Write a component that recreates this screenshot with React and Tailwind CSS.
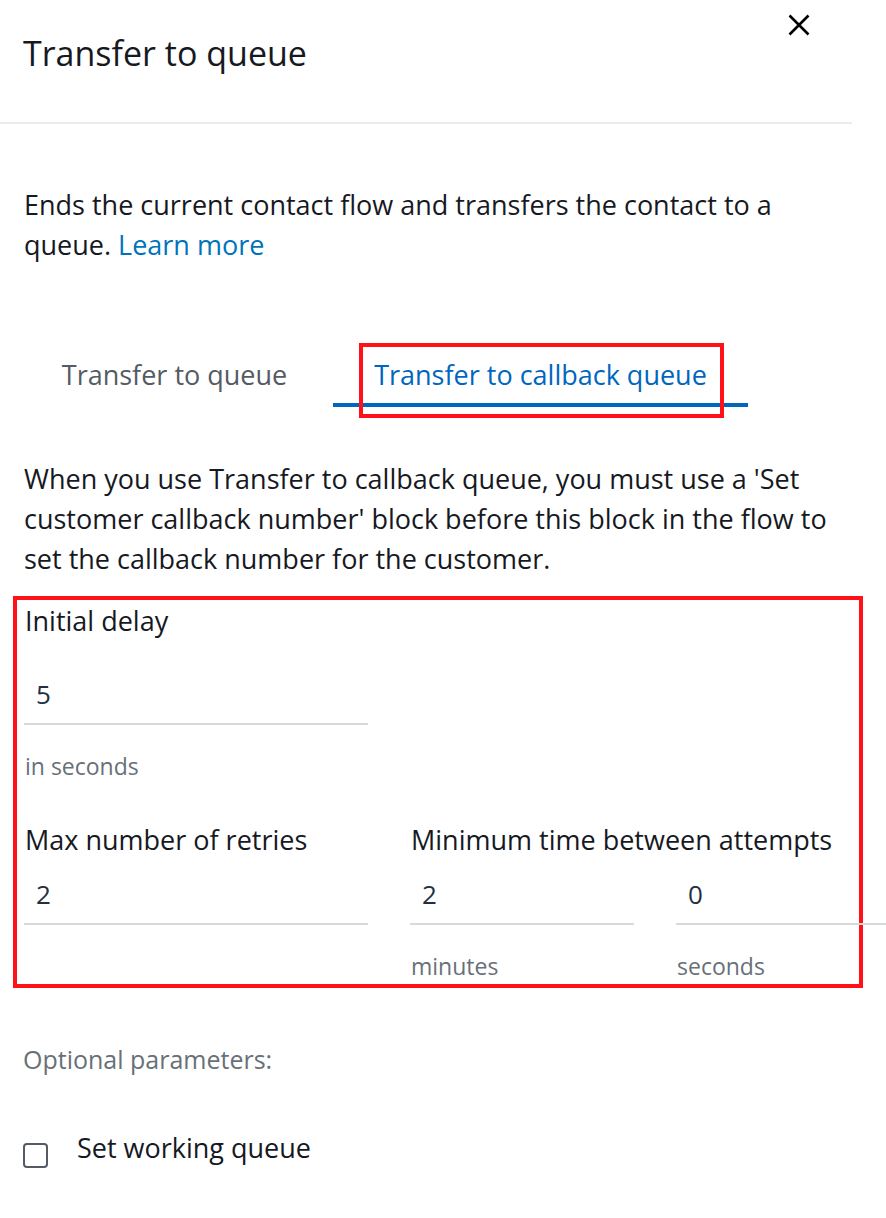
export default function App() {
  return (
    <div className="w-[886px] h-[1218px] bg-white overflow-hidden text-[#16191f]" style={{ fontFamily: '"Open Sans", Arial, sans-serif' }}>
      <div className="relative w-[852px] h-[124px] border-b-2 border-[#eaeded]">
        <h1 className="absolute left-[23px] top-[32px] text-[34px] leading-[42px] text-[#16191f] whitespace-nowrap">Transfer to queue</h1>
        <svg className="absolute left-[788px] top-[14px]" width="22" height="22" viewBox="0 0 22 22">
          <path d="M1.5 1.5 L20.5 20.5 M20.5 1.5 L1.5 20.5" stroke="#000" strokeWidth="2.6" />
        </svg>
      </div>
      <div className="pl-[24px] pt-[61px] text-[27px] leading-[40px] w-[830px]">
        <p>Ends the current contact flow and transfers the contact to a queue. <span className="text-[#0073bb]">Learn more</span></p>
      </div>
      <div className="mt-[90px] flex h-[52px] pl-[16px]">
        <div className="w-[317px] h-[52px] flex justify-center text-[27px] leading-[40px] text-[#545b64] whitespace-nowrap">Transfer to queue</div>
        <div className="relative w-[415px] h-[52px] border-b-4 border-[#0066c0] flex justify-center text-[27px] leading-[40px] text-[#0066c0] whitespace-nowrap">
          Transfer to callback queue
          <div className="absolute left-[26px] top-[-12px] w-[365px] h-[75px] border-4 border-[#ff1117]"></div>
        </div>
      </div>
      <div className="pl-[24px] pt-[52px] w-[862px] text-[27px] leading-[40px]">
        When you use Transfer to callback queue, you must use a 'Set customer callback number' block before this block in the flow to set the callback number for the customer.
      </div>
      <div className="ml-[13px] mt-[17px] w-[850px] h-[392px] border-4 border-[#ff1117]">
        <div className="pl-[8px] pt-[5px] text-[27px] leading-[32px] whitespace-nowrap">Initial delay</div>
        <div className="ml-[7px] mt-[43px] w-[344px] h-[45px] border-b-2 border-[#d5dbdb] pl-[12px] text-[26px] leading-[28px] text-[#232f3e]">5</div>
        <div className="pl-[8px] mt-[26px] text-[23px] leading-[30px] text-[#687078] whitespace-nowrap">in seconds</div>
        <div className="mt-[43px] flex pl-[7px]">
          <div className="w-[344px] shrink-0">
            <div className="pl-[1px] text-[27px] leading-[32px] whitespace-nowrap">Max number of retries</div>
            <div className="mt-[24px] h-[45px] border-b-2 border-[#d5dbdb] pl-[12px] text-[26px] leading-[28px] text-[#232f3e]">2</div>
          </div>
          <div className="ml-[42px]">
            <div className="pl-[1px] text-[27px] leading-[32px] whitespace-nowrap">Minimum time between attempts</div>
            <div className="flex mt-[24px]">
              <div className="w-[224px] shrink-0">
                <div className="h-[45px] border-b-2 border-[#d5dbdb] pl-[12px] text-[26px] leading-[28px] text-[#232f3e]">2</div>
                <div className="pl-[1px] mt-[26px] text-[23px] leading-[30px] text-[#687078] whitespace-nowrap">minutes</div>
              </div>
              <div className="w-[230px] shrink-0 ml-[42px]">
                <div className="h-[45px] border-b-2 border-[#d5dbdb] pl-[12px] text-[26px] leading-[28px] text-[#232f3e]">0</div>
                <div className="pl-[1px] mt-[26px] text-[23px] leading-[30px] text-[#687078] whitespace-nowrap">seconds</div>
              </div>
            </div>
          </div>
        </div>
      </div>
      <div className="pl-[23px] mt-[55px] text-[25px] leading-[32px] text-[#687078]">Optional parameters:</div>
      <div className="flex items-start pl-[23px] mt-[57px]">
        <div className="mt-[11px] w-[25px] h-[25px] border-2 border-[#545b64] rounded-[4px]"></div>
        <div className="ml-[29px] text-[27px] leading-[32px] text-[#16191f]">Set working queue</div>
      </div>
    </div>
  );
}
